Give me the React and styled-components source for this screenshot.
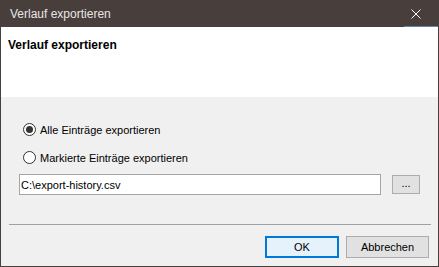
import React, { useState } from "react";
import styled, { createGlobalStyle } from "styled-components";

const GlobalStyle = createGlobalStyle`
  html, body {
    margin: 0;
    padding: 0;
    overflow: hidden;
    background: #f0f0f0;
  }
  * {
    box-sizing: border-box;
  }
`;

const FONT = `"Liberation Sans", Arial, sans-serif`;

export default function App() {
  const [mode, setMode] = useState("all");
  const [path, setPath] = useState("C:\\export-history.csv");

  return (
    <>
      <GlobalStyle />
      <Window>
        <TitleBar>
          <TitleText>Verlauf exportieren</TitleText>
          <CloseButton aria-label="Schließen">
            <svg width="10" height="10" viewBox="0 0 10 10">
              <path d="M0.5 0.5 L9.5 9.5 M9.5 0.5 L0.5 9.5" stroke="#ffffff" strokeWidth="1" />
            </svg>
          </CloseButton>
        </TitleBar>

        <Header>
          <HeaderTitle>Verlauf exportieren</HeaderTitle>
        </Header>

        <Body>
          <Options>
            <RadioRow onClick={() => setMode("all")}>
              <Radio $checked={mode === "all"} />
              <Label>Alle Einträge exportieren</Label>
            </RadioRow>
            <RadioRow onClick={() => setMode("marked")}>
              <Radio $checked={mode === "marked"} />
              <Label>Markierte Einträge exportieren</Label>
            </RadioRow>
          </Options>

          <PathRow>
            <PathInput value={path} onChange={(e) => setPath(e.target.value)} />
            <BrowseButton>...</BrowseButton>
          </PathRow>

          <Separator />

          <Footer>
            <Button $primary>OK</Button>
            <Button $wide>Abbrechen</Button>
          </Footer>
        </Body>
      </Window>
    </>
  );
}

const Window = styled.div`
  width: 439px;
  height: 267px;
  display: flex;
  flex-direction: column;
  border: 1px solid #483e3c;
  border-top: none;
  background: #f0f0f0;
  font-family: ${FONT};
  font-size: 11px;
  color: #000;
`;

const TitleBar = styled.div`
  height: 27px;
  margin: 0 -1px;
  display: flex;
  align-items: stretch;
  justify-content: space-between;
  background: #483e3c;
`;

const TitleText = styled.div`
  display: flex;
  align-items: center;
  padding-left: 10px;
  color: #e8e6e5;
  font-size: 12px;
`;

const CloseButton = styled.button`
  position: relative;
  width: 46px;
  padding: 0;
  border: none;
  background: transparent;
  display: flex;
  align-items: center;
  justify-content: center;

  &::after {
    content: "";
    position: absolute;
    left: 11px;
    right: 1px;
    bottom: 0;
    height: 1px;
    background: #5b8ab5;
  }
`;

const Header = styled.div`
  height: 70px;
  background: #ffffff;
  padding: 10px 7px 0;
`;

const HeaderTitle = styled.div`
  font-weight: bold;
  font-size: 12px;
  line-height: 16px;
  color: #000;
`;

const Body = styled.div`
  flex: 1;
  display: flex;
  flex-direction: column;
`;

const Options = styled.div`
  display: flex;
  flex-direction: column;
  gap: 15px;
  padding: 26px 0 0 22px;
`;

const RadioRow = styled.label`
  display: flex;
  align-items: center;
  gap: 4px;
  height: 13px;
  cursor: default;
`;

const Radio = styled.span`
  position: relative;
  width: 13px;
  height: 13px;
  border: 1px solid #333333;
  border-radius: 50%;
  background: #ffffff;
  flex-shrink: 0;

  &::after {
    content: "";
    position: absolute;
    inset: 2px;
    border-radius: 50%;
    background: #333333;
    display: ${(p) => (p.$checked ? "block" : "none")};
  }
`;

const Label = styled.span`
  line-height: 14px;
  white-space: nowrap;
`;

const PathRow = styled.div`
  display: flex;
  align-items: center;
  gap: 11px;
  margin-top: 10px;
  padding-left: 18px;
`;

const PathInput = styled.input`
  width: 362px;
  height: 21px;
  border: 1px solid #a5a5a5;
  background: #ffffff;
  padding: 0 1px;
  font-family: ${FONT};
  font-size: 11px;
  color: #000;
  outline: none;
`;

const BrowseButton = styled.button`
  width: 28px;
  height: 19px;
  padding: 0 0 3px;
  border: 1px solid #adadad;
  background: #e1e1e1;
  font-family: ${FONT};
  font-size: 11px;
  color: #000;
`;

const Separator = styled.div`
  height: 1px;
  margin: 29px 7px 0 8px;
  background: #a0a0a0;
`;

const Footer = styled.div`
  display: flex;
  justify-content: flex-end;
  gap: 7px;
  margin-top: 11px;
  padding-right: 9px;
`;

const Button = styled.button`
  width: ${(p) => (p.$wide ? "83px" : "74px")};
  height: 22px;
  padding: 0;
  border: ${(p) => (p.$primary ? "2px solid #0078d7" : "1px solid #adadad")};
  background: ${(p) => (p.$primary ? "#e5f1fb" : "#e1e1e1")};
  font-family: ${FONT};
  font-size: 11px;
  color: #000;
`;
